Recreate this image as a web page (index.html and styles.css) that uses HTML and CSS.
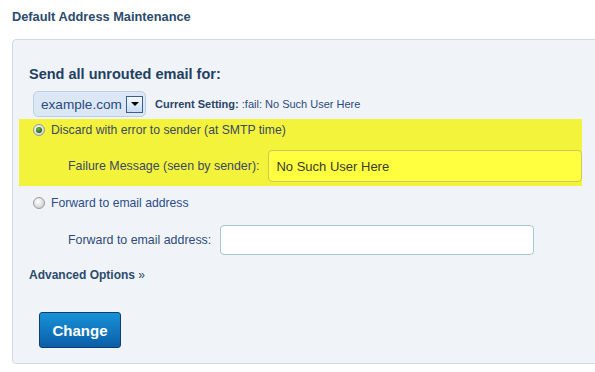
FILE: index.html
```html
<!DOCTYPE html>
<html>
<head>
<meta charset="utf-8">
<link rel="stylesheet" href="styles.css">
</head>
<body>
<h1 class="title">Default Address Maintenance</h1>
<div class="panel">
  <h2 class="section-head">Send all unrouted email for:</h2>
  <div class="domain-row">
    <div class="select">
      <span class="select-text">example.com</span>
      <span class="select-btn"><span class="arrow"></span></span>
    </div>
    <div class="current"><b>Current Setting:</b> :fail: No Such User Here</div>
  </div>
  <div class="highlight">
    <div class="radio-row">
      <span class="radio checked"></span>
      <span class="radio-label dark">Discard with error to sender (at SMTP time)</span>
    </div>
    <div class="field-row fail-row">
      <span class="field-label">Failure Message (seen by sender):</span>
      <div class="input yellow">No Such User Here</div>
    </div>
  </div>
  <div class="radio-row second">
    <span class="radio"></span>
    <span class="radio-label">Forward to email address</span>
  </div>
  <div class="field-row fwd-row">
    <span class="field-label">Forward to email address:</span>
    <div class="input white"></div>
  </div>
  <div class="advanced">Advanced Options <span class="raquo">»</span></div>
  <div class="actions">
    <button class="btn">Change</button>
  </div>
</div>
</body>
</html>
```
FILE: styles.css
```css
html, body {
  margin: 0;
  padding: 0;
  background: #ffffff;
  font-family: "Liberation Sans", Arial, sans-serif;
  overflow: hidden;
}
.title {
  margin: 0;
  padding: 9px 12px 0;
  height: 39px;
  box-sizing: border-box;
  font-size: 12.8px;
  line-height: 16px;
  font-weight: bold;
  color: #2b4a6d;
}
.panel {
  margin-left: 12px;
  width: 600px;
  height: 325px;
  box-sizing: border-box;
  border: 1px solid #d3d9e4;
  border-radius: 4px;
  background: #f0f4f9;
  padding: 25px 0 0 6px;
}
.section-head {
  margin: 0 0 0 10px;
  font-size: 14.5px;
  line-height: 19px;
  font-weight: bold;
  color: #233f62;
}
.domain-row {
  display: flex;
  align-items: center;
  margin: 7px 0 0 14px;
  height: 26px;
}
.select {
  display: flex;
  align-items: center;
  width: 113px;
  height: 26px;
  box-sizing: border-box;
  border: 1px solid #bccfe3;
  border-radius: 5px;
  background: #dbe7f5;
  padding: 0 0 0 7px;
}
.select-text {
  font-size: 13.6px;
  color: #2b4a7c;
  flex: 1;
}
.select-btn {
  width: 17px;
  height: 17px;
  box-sizing: border-box;
  border: 1px solid #3b5e8f;
  background: linear-gradient(#f4f9ff, #c9dcf1);
  display: flex;
  align-items: center;
  justify-content: center;
  margin-right: 2px;
}
.arrow {
  width: 0;
  height: 0;
  border-left: 4px solid transparent;
  border-right: 4px solid transparent;
  border-top: 4px solid #000;
}
.current {
  margin-left: 9px;
  font-size: 11px;
  color: #2b4a7c;
}
.current b {
  color: #2b4465;
}
.highlight {
  margin-top: 2px;
  width: 563px;
  height: 67px;
  background: #f3f33b;
  box-sizing: border-box;
  padding-top: 1px;
}
.radio-row {
  display: flex;
  align-items: center;
  height: 20px;
  padding-left: 14px;
}
.radio-row.second {
  margin-top: 7px;
}
.radio {
  width: 12px;
  height: 12px;
  box-sizing: border-box;
  border-radius: 50%;
  border: 1px solid #9a9a9a;
  background: radial-gradient(circle at 40% 35%, #ffffff, #d6d6d6 70%, #bdbdbd);
  display: inline-flex;
  align-items: center;
  justify-content: center;
}
.radio.checked::after {
  content: "";
  width: 6px;
  height: 6px;
  border-radius: 50%;
  background: radial-gradient(circle at 40% 35%, #6fbf4a, #1e5a1a 75%);
}
.radio-label {
  margin-left: 6px;
  font-size: 12.2px;
  color: #2c4c8a;
}
.radio-label.dark {
  color: #3b4964;
}
.field-row {
  display: flex;
  align-items: center;
  padding-left: 49px;
}
.fail-row {
  margin-top: 10px;
}
.fwd-row {
  margin-top: 12px;
}
.field-label {
  font-size: 12.4px;
  color: #3b4964;
  margin-right: 9px;
  white-space: nowrap;
  flex-shrink: 0;
}
.fwd-row .field-label {
  color: #2f4a77;
  margin-right: 9px;
}
.input {
  width: 314px;
  flex-shrink: 0;
  box-sizing: border-box;
  border-radius: 4px;
  font-size: 13px;
  display: flex;
  align-items: center;
  padding-left: 7px;
}
.input.yellow {
  height: 32px;
  background: #ffff40;
  border: 1px solid #c9c95c;
  color: #3a3a2a;
}
.input.white {
  height: 30px;
  background: #ffffff;
  border: 1px solid #a7c5d6;
}
.advanced {
  margin: 13px 0 0 10px;
  font-size: 12px;
  font-weight: bold;
  color: #2b4a6d;
  line-height: 15px;
}
.raquo {
  font-weight: normal;
}
.actions {
  margin: 29px 0 0 20px;
}
.btn {
  width: 82px;
  height: 36px;
  border: 1px solid #0c3f70;
  border-radius: 3px;
  background: linear-gradient(#1792d7, #0b5fa8);
  color: #ffffff;
  font-family: "Liberation Sans", Arial, sans-serif;
  font-size: 15px;
  font-weight: bold;
  padding: 0;
  cursor: pointer;
}
```
